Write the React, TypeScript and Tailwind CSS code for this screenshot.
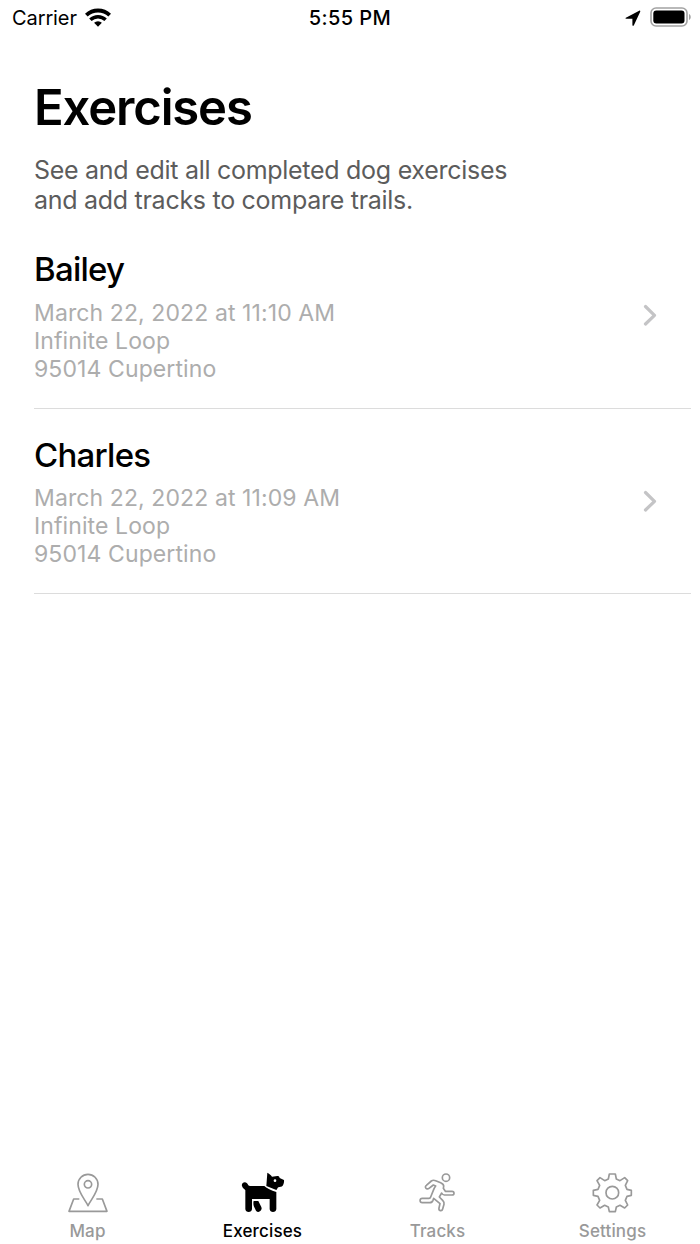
import React from "react";

type TabProps = { label: string; active?: boolean; viewBox: string; children: React.ReactNode };

type Exercise = { name: string; date: string; street: string; city: string };

const exercises: Exercise[] = [
  {
    name: "Bailey",
    date: "March 22, 2022 at 11:10 AM",
    street: "Infinite Loop",
    city: "95014 Cupertino",
  },
  {
    name: "Charles",
    date: "March 22, 2022 at 11:09 AM",
    street: "Infinite Loop",
    city: "95014 Cupertino",
  },
];

const StatusBar = () => (
  <header className="grid h-9 grid-cols-3 items-center pl-3 pr-2 text-[20px] leading-9 text-black">
    <div className="flex items-center gap-2">
      <span className="tracking-[-0.1px]">Carrier</span>
      <svg className="-mt-0.5 h-[19px] w-[26px]" viewBox="0 0 26 19" fill="none" stroke="currentColor">
        <path d="M1.3 7.2a16.8 16.8 0 0 1 23.4 0" strokeWidth="3.9" />
        <path d="M5.4 11.7a11 11 0 0 1 15.2 0" strokeWidth="3.500" />
        <path d="M13 18.7l-3.9-3.9a5.6 5.6 0 0 1 7.8 0z" fill="currentColor" stroke="none" />
      </svg>
    </div>
    <div className="pr-1 text-center font-medium tracking-[0.4px]">5:55 PM</div>
    <div className="flex items-center justify-end gap-[9px]">
      <svg className="h-4 w-4" viewBox="0 0 16 16" fill="currentColor">
        <path d="M.9 7.7 14.2.7c.8-.3 1.300.2 1 1L8.900 15.200c-.5.9-1.500.7-1.500-.3V8.700H1.300c-1 0-1.200-.6-.4-1z" />
      </svg>
      <svg className="-mt-0.5 h-5 w-[42px]" viewBox="0 0 42 20">
        <rect x="1" y="1" width="36" height="18" rx="5" fill="none" stroke="#a3a3a3" strokeWidth="1.6" />
        <rect x="3.3" y="3.6" width="31.2" height="12.8" rx="3" fill="#000" />
        <path d="M39 7c2.3.7 2.3 5.300 0 6z" fill="#a3a3a3" />
      </svg>
    </div>
  </header>
);

const ExerciseRow = ({ item }: { item: Exercise }) => (
  <li className="flex h-[185.500px] justify-between border-b border-[#dcdcdc] pt-[26px]">
    <div>
      <h2 className="text-[33px] font-medium leading-10 tracking-[-0.75px] text-black">{item.name}</h2>
      <div className="mt-[9.500px] text-[23px] leading-7 tracking-[0.1px] text-[#adadad]">
        <p>{item.date}</p>
        <p>{item.street}</p>
        <p>{item.city}</p>
      </div>
    </div>
    <svg
      className="mr-[34px] mt-[55px] h-[22px] w-[14px]"
      viewBox="0 0 14 22"
      fill="none"
      stroke="#c4c4c6"
      strokeWidth="3.200"
      strokeLinecap="round"
      strokeLinejoin="round"
    >
      <path d="M2.500 2.500 11.500 11.300 2.500 20" />
    </svg>
  </li>
);

const Tab = ({ label, active, viewBox, children }: TabProps) => (
  <a className={`flex flex-col items-center ${active ? "text-black" : "text-[#999999]"}`}>
    <svg
      className="h-12 w-12"
      viewBox={viewBox}
      fill="none"
      stroke="currentColor"
      strokeWidth="5"
      strokeLinejoin="round"
    >
      {children}
    </svg>
    <span className="mt-1 text-[17px] font-medium leading-5 tracking-[0.15px]">{label}</span>
  </a>
);

const App = () => {
  return (
    <div className="flex h-[1244px] w-[700px] flex-col overflow-hidden bg-white font-['Inter',sans-serif]">
      <StatusBar />

      <main className="flex-1 pl-[34px] pr-[9px] pt-[42px]">
        <h1 className="text-[49px] font-semibold leading-[60px] tracking-[-1.15px] text-black">Exercises</h1>
        <p className="mt-[17px] text-[25px] leading-[30px] tracking-[-0.28px] text-[#5c5c5c]">
          See and edit all completed dog exercises
          <br />
          and add tracks to compare trails.
        </p>
        <ul className="mt-2">
          {exercises.map((item) => (
            <ExerciseRow key={item.name} item={item} />
          ))}
        </ul>
      </main>

      <nav className="grid h-[75px] grid-cols-4">
        <Tab label="Map" viewBox="24 15 144 144">
          {/* pin over a folded map */}
          <path d="M96 125C88 108 66 85 66 61a30 30 0 0 1 60 0c0 24-22 47-30 64z" />
          <circle cx="96" cy="61" r="11" />
          <path d="M70 105H53L39 142H153L139 105H121" />
        </Tab>
        <Tab label="Exercises" active viewBox="69 15 144 144">
          <g fill="currentColor" stroke="none">
            <path d="M154 26c5 3 11 7 14 12l16-2c4 0 6 2 7 6l13 6c1 6-1 13-4 17-3 4-8 3-13 5-3 2-3 6-6 8l-30-12z" />
            <path d="M78 66c-3-9 9-15 15-8 3 3 3 8 10 8h42c8 8 20 13 36 18v51c0 12-20 12-20 0v-30h-53v30c0 12-20 12-20 0V79c-3-5-8-6-10-13z" />
            <path d="M113 111h14l9 18c4 11-9 20-16 11l-5-10c-2-5-4-13-2-19z" />
          </g>
          <circle cx="177" cy="50" r="4" fill="#fff" stroke="none" />
        </Tab>
        <Tab label="Tracks" viewBox="42 15 144 144">
          {/* runner */}
          <circle cx="138" cy="41" r="11" />
          <path d="M79 64l15-13c4-3 8-3 13-1l15 6c7 3 10 7 9 12l-1 5 6 9h20c8 0 8 11 0 11h-23c-4 0-6-2-8-6l-7 12 10 10c4 4 5 7 4 12l-4 14c-2 8-13 6-11-3l3-13-19-16-2 6c-2 5-5 7-10 7H67c-9 0-9-13 0-13h20c3 0 4-1 5-4l8-20c2-5 4-9 7-13l-7-3-13 10c-7 6-15-4-8-9z" />
        </Tab>
        <Tab label="Settings" viewBox="57 15 144 144">
          <circle cx="127" cy="86" r="19" />
          <path d="M118 30h18l3 15 11 5 14-9 9 9-7 14 5 12 13 3v15l-13 3-5 12 7 14-9 9-14-8-11 5-3 14h-18l-3-14-11-5-14 8-9-9 8-14-5-12-14-3V79l14-3 5-12-8-14 9-9 14 9 11-5z" />
        </Tab>
      </nav>
    </div>
  );
};

export default App;
